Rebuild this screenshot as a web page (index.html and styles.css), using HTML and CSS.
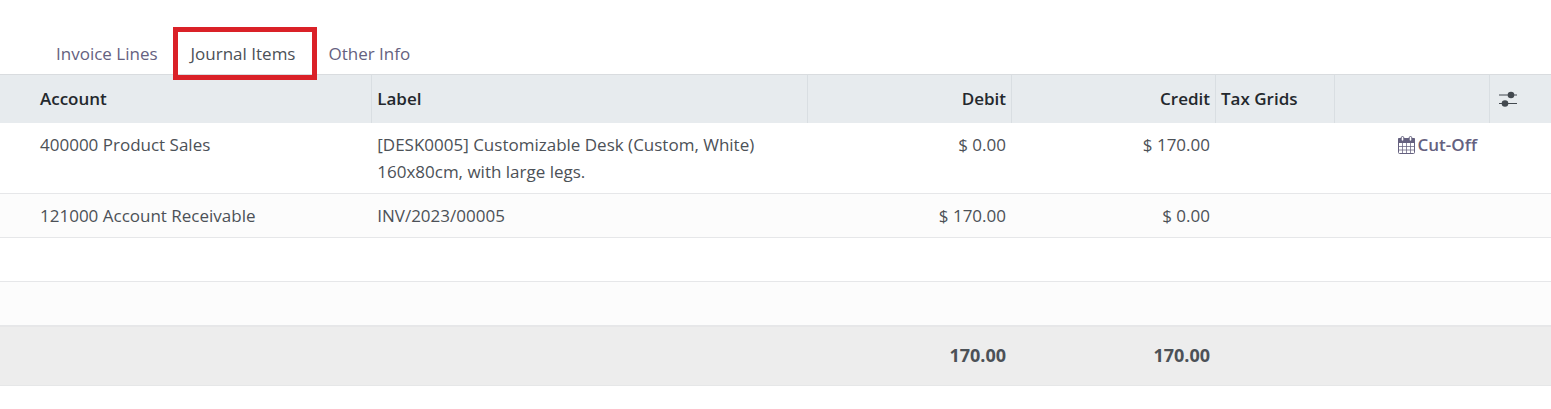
FILE: index.html
```html
<!DOCTYPE html>
<html lang="en">
<head>
    <meta charset="UTF-8">
    <meta name="viewport" content="width=device-width, initial-scale=1.0">
    <title>Journal Items</title>
    <link rel="stylesheet" href="styles.css">
</head>
<body>
    <!-- Tabs -->
    <nav class="tabs">
        <a class="tab" href="#invoice-lines">Invoice Lines</a>
        <a class="tab active" href="#journal-items">Journal Items</a>
        <a class="tab" href="#other-info">Other Info</a>
    </nav>

    <!-- Journal items list -->
    <table class="list" id="journal-items">
        <colgroup>
            <col class="col-account">
            <col>
            <col class="col-amount">
            <col class="col-amount">
            <col class="col-tax">
            <col class="col-action">
            <col class="col-options">
        </colgroup>
        <thead>
            <tr>
                <th>Account</th>
                <th>Label</th>
                <th class="number">Debit</th>
                <th class="number">Credit</th>
                <th>Tax Grids</th>
                <th></th>
                <th class="options">
                    <button class="options-button" type="button" aria-label="Optional columns">
                        <svg width="18" height="16" viewBox="0 0 18 16" fill="currentColor">
                            <path d="M0 3.4h18v1.2H0zM0 11.9h18v1.2H0z"/>
                            <circle cx="12" cy="4" r="3.3"/>
                            <circle cx="6" cy="12.5" r="3.3"/>
                        </svg>
                    </button>
                </th>
            </tr>
        </thead>
        <tbody>
            <tr>
                <td>400000 Product Sales</td>
                <td>[DESK0005] Customizable Desk (Custom, White)<br>160x80cm, with large legs.</td>
                <td class="number">$ 0.00</td>
                <td class="number">$ 170.00</td>
                <td></td>
                <td class="action">
                    <button class="cutoff" type="button">
                        <svg width="17" height="18" viewBox="0 0 17 18" fill="none" stroke="currentColor">
                            <rect x=".5" y="2.5" width="16" height="15" rx="1"/>
                            <path d="M0 3q0-1 1-1h15q1 0 1 1v4H0z" fill="currentColor" stroke="none"/>
                            <path d="M4.5 7v10M8.5 7v10M12.5 7v10M1 10.5h15M1 14h15" stroke-opacity=".75"/>
                            <rect x="3.2" y=".5" width="2.6" height="4.6" rx="1.3" fill="#fff"/>
                            <rect x="11.2" y=".5" width="2.6" height="4.6" rx="1.3" fill="#fff"/>
                        </svg>
                        <span>Cut-Off</span>
                    </button>
                </td>
                <td></td>
            </tr>
            <tr>
                <td>121000 Account Receivable</td>
                <td>INV/2023/00005</td>
                <td class="number">$ 170.00</td>
                <td class="number">$ 0.00</td>
                <td></td>
                <td></td>
                <td></td>
            </tr>
            <tr>
                <td colspan="7">&nbsp;</td>
            </tr>
            <tr>
                <td colspan="7">&nbsp;</td>
            </tr>
        </tbody>
        <tfoot>
            <tr>
                <td></td>
                <td></td>
                <td class="number">170.00</td>
                <td class="number">170.00</td>
                <td></td>
                <td></td>
                <td></td>
            </tr>
        </tfoot>
    </table>
</body>
</html>
```
FILE: styles.css
```css
body {
    font-family: "Open Sans", "Noto Sans", sans-serif;
    font-size: 17px;
    line-height: 27px;
    margin: 0;
    padding: 32px 0 0;
    background-color: #fff;
    color: #4c5157;
}

.tabs {
    display: flex;
    gap: 1px;
    padding: 0 40px;
}

.tab {
    position: relative;
    padding: 8px 16px 7px;
    color: #65617f;
    text-decoration: none;
}

.tab.active {
    color: #4c5157;
}

/* red frame round the open tab, lies over the table header */
.tab.active::after {
    content: "";
    position: absolute;
    top: -5px;
    right: -6px;
    bottom: -6px;
    left: -2px;
    border: 5px solid #da2128;
}

.list {
    width: 100%;
    table-layout: fixed;
    border-collapse: separate;
    border-spacing: 0;
}

.col-account {
    width: 24%;
}

.col-amount {
    width: 204px;
}

.col-tax {
    width: 119px;
}

.col-action {
    width: 155px;
}

.col-options {
    width: 61px;
}

th, td {
    padding: 8px 5px;
    text-align: left;
    vertical-align: top;
}

td.number {
    padding-right: 6px;
}

th:first-child, td:first-child {
    padding-left: 40px;
}

.number {
    text-align: right;
}

th {
    padding: 10px 5px 11px;
    font-weight: 600;
    color: #24282d;
    background-color: #e7ebee;
    border-top: 1px solid #d9dcdf;
    border-right: 1px solid #d9dee2;
}

th:last-child {
    border-right: none;
}

tbody td {
    border-bottom: 1px solid #e6e7e9;
}

tbody tr:nth-child(even) td {
    background-color: #fcfcfc;
}

tfoot td {
    padding-top: 15px;
    padding-bottom: 16px;
    font-size: 18px;
    font-weight: 700;
    background-color: #ededed;
    border-top: 1px solid #e7e7e8;
    border-bottom: 1px solid #e6e7e8;
}

button {
    padding: 0;
    border: none;
    background: none;
    font: inherit;
    cursor: pointer;
}

th.options {
    padding-left: 9px;
}

.options-button {
    display: flex;
    align-items: center;
    height: 27px;
    color: #43494f;
}

td.action {
    padding-right: 13px;
}

.cutoff {
    display: flex;
    align-items: center;
    gap: 3px;
    margin-left: auto;
    font-weight: 600;
    color: #65617f;
}
```
